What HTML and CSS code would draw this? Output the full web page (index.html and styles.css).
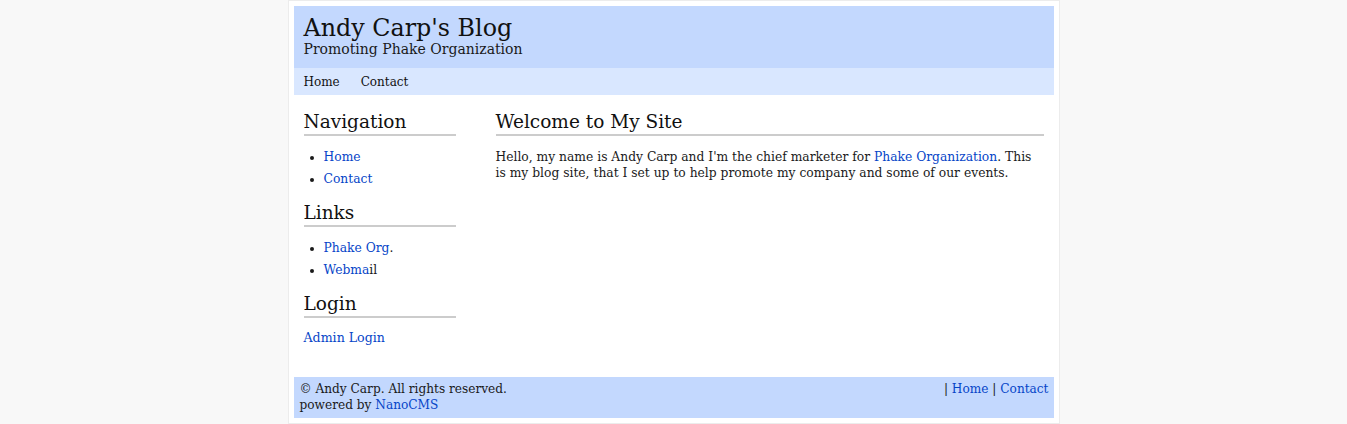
FILE: index.html
```html
<!DOCTYPE html>
<html>
<head>
<meta charset="utf-8">
<title>Andy Carp's Blog</title>
<link rel="stylesheet" href="styles.css">
</head>
<body>
<div class="page">
  <div class="header">
    <div class="site-title">Andy Carp's Blog</div>
    <div class="site-slogan">Promoting Phake Organization</div>
  </div>
  <div class="topnav">
    <a href="#">Home</a>
    <a href="#">Contact</a>
  </div>
  <div class="body">
    <div class="sidebar">
      <h2 class="side-title">Navigation</h2>
      <ul class="side-list">
        <li><a href="#">Home</a></li>
        <li><a href="#">Contact</a></li>
      </ul>
      <h2 class="side-title">Links</h2>
      <ul class="side-list">
        <li><a href="#">Phake Org</a>.</li>
        <li><a href="#">Webma</a>il</li>
      </ul>
      <h2 class="side-title">Login</h2>
      <p class="side-text"><a href="#">Admin Login</a></p>
    </div>
    <div class="main">
      <h2 class="main-title">Welcome to My Site</h2>
      <p class="main-text">Hello, my name is Andy Carp and I'm the chief marketer for <a href="#">Phake Organization</a>. This is my blog site, that I set up to help promote my company and some of our events.</p>
    </div>
  </div>
  <div class="footer">
    <div class="footer-left">&copy; Andy Carp. All rights reserved.<br>powered by <a href="#">NanoCMS</a></div>
    <div class="footer-right">| <a href="#">Home</a> | <a href="#">Contact</a></div>
  </div>
</div>
</body>
</html>
```
FILE: styles.css
```css
html, body {
  margin: 0;
  padding: 0;
  background: #f8f8f8;
}
body {
  font-family: "DejaVu Serif", serif;
  font-size: 12.3px;
  color: #1a1a1a;
}
a {
  color: #0645c8;
  text-decoration: none;
}
.page {
  width: 760px;
  margin: 0 auto;
  padding: 5px;
  background: #fff;
  border: 1px solid #ececec;
}
.header {
  background: #c3d8fe;
  padding: 8px 10px 10px;
  height: 44px;
}
.site-title {
  font-size: 23.8px;
  line-height: 28px;
  color: #111;
}
.site-slogan {
  font-size: 14px;
  line-height: 15px;
}
.topnav {
  background: #d9e7ff;
  padding: 0 10px;
  height: 27px;
  display: flex;
  align-items: center;
  gap: 21px;
  font-size: 12px;
}
.topnav a {
  color: #111;
}
.body {
  display: flex;
  padding: 4px 10px 0;
  gap: 40px;
  min-height: 278px;
}
.sidebar {
  width: 152px;
  flex-shrink: 0;
}
.main {
  flex: 1;
}
.side-title, .main-title {
  font-size: 18.5px;
  font-weight: normal;
  line-height: 24px;
  margin: 11px 0 0;
  border-bottom: 2px solid #ccc;
  color: #111;
}
.side-list {
  margin: 10px 0 0;
  padding-left: 20px;
}
.side-list li {
  line-height: 22px;
}
.side-text {
  margin: 12px 0 0;
  line-height: 16px;
  font-size: 12.6px;
}
.main-text {
  margin: 13px 0 0;
  line-height: 16px;
}
.footer {
  background: #c3d8fe;
  padding: 4px 5px 5px 6px;
  display: flex;
  justify-content: space-between;
  line-height: 16px;
  font-size: 12.15px;
}
```
